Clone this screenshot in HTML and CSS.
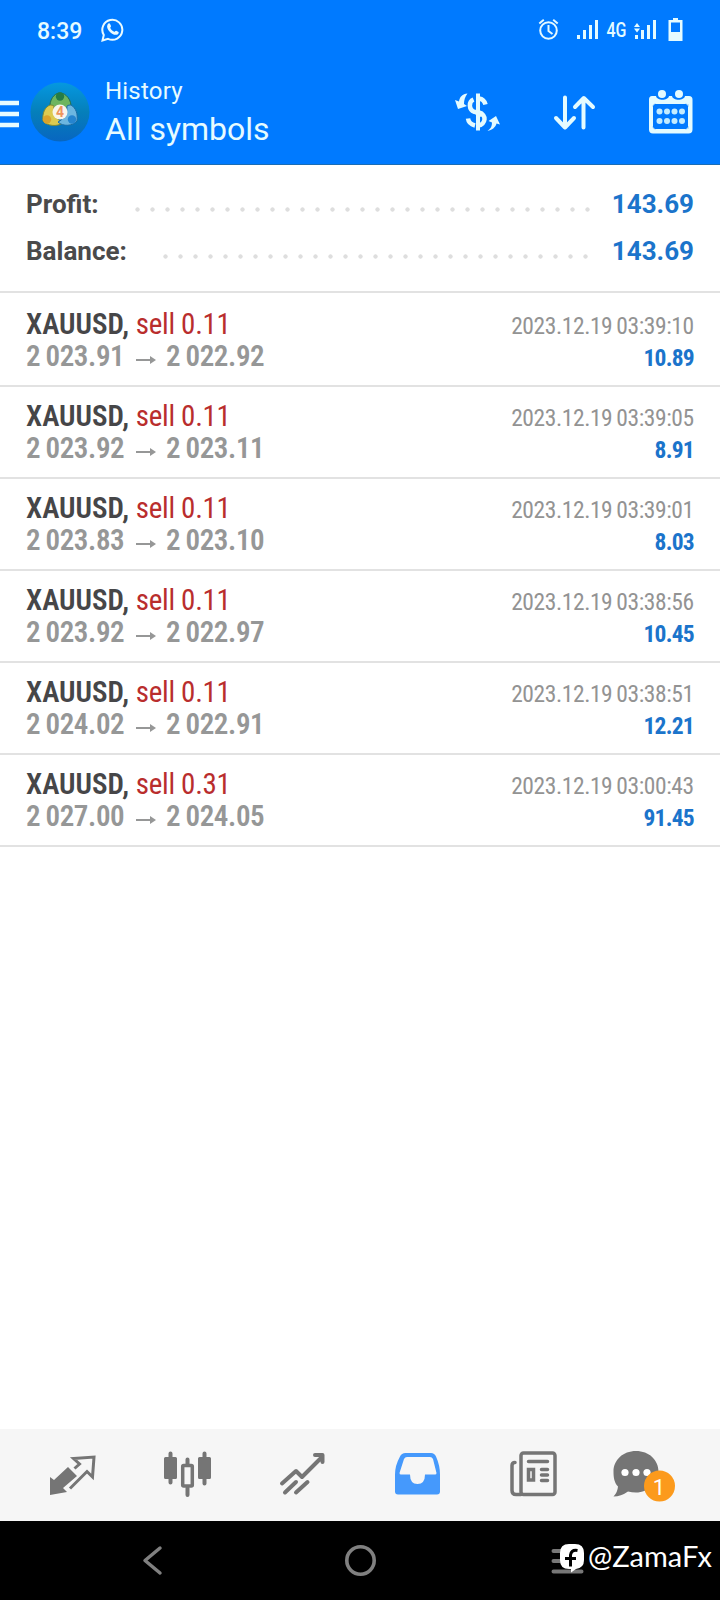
FILE: index.html
```html
<!DOCTYPE html>
<html lang="en">
<head>
<meta charset="utf-8">
<title>History</title>
<link rel="stylesheet" href="styles.css">
</head>
<body>
<div class="screen">
  <header class="top">
    <div class="status">
      <span class="clock">8:39</span>
      <svg class="whatsapp" width="24" height="26" viewBox="0 0 24 26"><path d="M1.500 23.500l1.300-5.500A10 10 0 1 1 7 21.800z" fill="none" stroke="#e9fbff" stroke-width="2"/><path d="M6.600 7.500c1-1.700 2.100-1.400 2.600-.3l.8 1.900c.2.700-.9 1.500-.7 2 .8 1.700 2.100 2.900 3.900 3.600.6.200 1.300-1.300 2-1l2 1c1 .6.500 2-.6 2.700-2.300 1.300-5.700-.3-7.900-2.700-2.200-2.300-3.400-5-2.100-7.200z" fill="#e9fbff"/></svg>
      <svg class="indicators" width="150" height="30" viewBox="535 15 150 30">
        <g fill="none" stroke="#e4f9ff" stroke-width="2"><circle cx="548.500" cy="30.500" r="8.300"/><path d="M548.500 25v6l4 3M539.300 23.500l4.500-3.700M557.700 23.500l-4.500-3.700"/></g>
        <g fill="#e4fbff"><path d="M577 35h3v4h-3zM583 30h3v9h-3zM589 25h3v14h-3zM595 20h3v19h-3zM635 35h3v4h-3zM641 30h3v9h-3zM647 25h3v14h-3zM653 20h3v19h-3z"/><path d="M634 27l3-4 3 4zM634 28.500h6l-3 4z"/><path fill-rule="evenodd" d="M673 18h5v2h4.500v21h-14V20h4.500zM671 22.500v9.500h9v-9.500z"/></g>
        <text class="net" x="606.500" y="36.500" textLength="20" lengthAdjust="spacingAndGlyphs">4G</text>
      </svg>
    </div>
    <div class="bar">
      <svg class="menu" width="20" height="30" viewBox="0 0 20 30"><path d="M0 4h19M0 15h19M0 26h19" stroke="#e6fbff" stroke-width="4.500"/></svg>
      <svg class="logo" width="60" height="60" viewBox="0 0 60 60">
        <defs>
          <linearGradient id="sea" x1="0" y1="0" x2="0" y2="1"><stop offset="0" stop-color="#0598e0"/><stop offset=".5" stop-color="#057fba"/><stop offset="1" stop-color="#0866c0"/></linearGradient>
        </defs>
        <circle cx="30" cy="30" r="29.500" fill="url(#sea)"/>
        <path d="M20 27c-1-9 4-16 10-16s12 7 11 16c-2 2-5 3-7 3h-8c-3 0-5-1-6-3z" fill="#6db55f" stroke="#286f48"/>
        <path d="M20 23c-5 2-8 8-7 16 4 5 14 6 20 2-7-4-10-9-9-17-1-1-3-1-4-1z" fill="#dccb50" stroke="#7b8a35"/>
        <path d="M41 23c5 3 7 9 6 16-4 5-14 6-19 1 6-3 9-8 9-16 1-1 3-1 4-1z" fill="#6cb6e0" stroke="#1b6ba4"/>
        <circle cx="30" cy="14.500" r="4.200" fill="#257c45"/><circle cx="17" cy="37.500" r="4.200" fill="#d9a32c"/><circle cx="42" cy="37.500" r="4.200" fill="#2584cf"/>
        <circle cx="30" cy="30" r="7.500" fill="#f8f5ec"/>
        <text class="four" x="30" y="35" text-anchor="middle">4</text>
      </svg>
      <div class="titles"><div class="kicker">History</div><div class="title">All symbols</div></div>
      <svg class="actions" width="245" height="50" viewBox="450 87 245 50">
        <g fill="none" stroke="#e4fbff">
          <path d="M478 93.500v37" stroke-width="4"/>
          <path d="M473.500 99.500c-5 2-5 10 1 12.500M479 98.500c3.500.5 5.500 2 6.500 6M479 112.500c8 2 7 12-1 13M468 118.500c.5 4 3 6 7 7M474 111.500l8 3.500" stroke-width="4.500"/>
        </g>
        <path d="M467.500 93.500c-5 .500-8 3.500-8.500 8l-4-1.500 3 9 9-3-3-2c0-4 1-7 3.500-10.500zM487.500 131c3.500-2.500 4.500-5 4.500-8.500l-3.500-1.500 7.500-5 4 8.500-3.500-1c-1 4-4.500 6.500-9 7.500z" fill="#e4fbff"/>
        <g fill="none" stroke="#e4fbff" stroke-width="4" stroke-linecap="round" stroke-linejoin="round"><path d="M565 97.500v30M556 118l9 9.500 9-9.500M583.500 127.500v-29M575 107l8.800-9 9.200 9"/></g>
        <path fill-rule="evenodd" fill="#e4fbff" d="M652 96h4c1 5 12 5 13 0h3c1 5 12 5 13 0h4q3.500 0 3.500 3.500v30q0 4-4 4h-35.500q-4 0-4-4v-30q0-3.500 3-3.500zm1.500 8.500v24h35v-24z"/>
        <rect x="652.500" y="103.500" width="36" height="26" rx="3" fill="#007aff" stroke="#e4fbff" stroke-width="1"/>
        <circle cx="662" cy="94" r="4" fill="#e4fbff"/><circle cx="679" cy="94" r="4" fill="#e4fbff"/>
        <g fill="#c3ecff"><circle cx="659.500" cy="111.500" r="3"/><circle cx="667" cy="111.500" r="3"/><circle cx="674.500" cy="111.500" r="3"/><circle cx="682" cy="111.500" r="3"/><circle cx="659.500" cy="121" r="3"/><circle cx="667" cy="121" r="3"/><circle cx="674.500" cy="121" r="3"/><circle cx="682" cy="121" r="3"/></g>
      </svg>
    </div>
  </header>

  <main class="content">
    <section class="summary">
      <div class="sum-row"><span class="label">Profit:</span><span class="dots dots-profit"></span><span class="total">143.69</span></div>
      <div class="sum-row"><span class="label">Balance:</span><span class="dots dots-balance"></span><span class="total">143.69</span></div>
    </section>
    <section class="deals">
      <div class="deal first"><div class="line"><span class="sym"><b>XAUUSD,</b> <span class="side">sell 0.11</span></span><span class="date">2023.12.19 03:39:10</span></div><div class="line"><span class="price"><span class="from">2 023.91</span><svg class="arrow" width="20" height="10" viewBox="0 0 20 10"><path d="M0 5h17"/><path class="tip" d="M14 1l6 4-6 4z"/></svg>2 022.92</span><span class="gain">10.89</span></div></div>
      <div class="deal"><div class="line"><span class="sym"><b>XAUUSD,</b> <span class="side">sell 0.11</span></span><span class="date">2023.12.19 03:39:05</span></div><div class="line"><span class="price"><span class="from">2 023.92</span><svg class="arrow" width="20" height="10" viewBox="0 0 20 10"><path d="M0 5h17"/><path class="tip" d="M14 1l6 4-6 4z"/></svg>2 023.11</span><span class="gain">8.91</span></div></div>
      <div class="deal"><div class="line"><span class="sym"><b>XAUUSD,</b> <span class="side">sell 0.11</span></span><span class="date">2023.12.19 03:39:01</span></div><div class="line"><span class="price"><span class="from">2 023.83</span><svg class="arrow" width="20" height="10" viewBox="0 0 20 10"><path d="M0 5h17"/><path class="tip" d="M14 1l6 4-6 4z"/></svg>2 023.10</span><span class="gain">8.03</span></div></div>
      <div class="deal"><div class="line"><span class="sym"><b>XAUUSD,</b> <span class="side">sell 0.11</span></span><span class="date">2023.12.19 03:38:56</span></div><div class="line"><span class="price"><span class="from">2 023.92</span><svg class="arrow" width="20" height="10" viewBox="0 0 20 10"><path d="M0 5h17"/><path class="tip" d="M14 1l6 4-6 4z"/></svg>2 022.97</span><span class="gain">10.45</span></div></div>
      <div class="deal"><div class="line"><span class="sym"><b>XAUUSD,</b> <span class="side">sell 0.11</span></span><span class="date">2023.12.19 03:38:51</span></div><div class="line"><span class="price"><span class="from">2 024.02</span><svg class="arrow" width="20" height="10" viewBox="0 0 20 10"><path d="M0 5h17"/><path class="tip" d="M14 1l6 4-6 4z"/></svg>2 022.91</span><span class="gain">12.21</span></div></div>
      <div class="deal"><div class="line"><span class="sym"><b>XAUUSD,</b> <span class="side">sell 0.31</span></span><span class="date">2023.12.19 03:00:43</span></div><div class="line"><span class="price"><span class="from">2 027.00</span><svg class="arrow" width="20" height="10" viewBox="0 0 20 10"><path d="M0 5h17"/><path class="tip" d="M14 1l6 4-6 4z"/></svg>2 024.05</span><span class="gain">91.45</span></div></div>
    </section>
  </main>

  <nav class="tabs">
    <svg class="tab" viewBox="15 1429 115 92"><path d="M50 1477l4 3 14-13 9 9-14 12 4 4-17 3z" fill="#757575"/><path d="M74.500 1468.500l5-4.500-6-5.500 20.500-1.500-1.500 20-5.500-5.500-17 17" fill="none" stroke="#757575" stroke-width="3"/></svg>
    <svg class="tab" viewBox="130 1429 115 92"><g fill="none" stroke="#757575" stroke-width="4" stroke-linecap="round"><path d="M170.500 1453.500v29M204.500 1453.500v30M187.500 1459.500v5M187.500 1488v7"/></g><path fill="#757575" d="M165.500 1457h10q1.500 0 1.500 1.500v19q0 1.500-1.500 1.500h-10q-1.500 0-1.500-1.500v-19q0-1.500 1.500-1.500zM199.500 1457h10q1.500 0 1.500 1.500v19q0 1.500-1.500 1.500h-10q-1.500 0-1.500-1.500v-19q0-1.500 1.500-1.500z"/><rect x="182.700" y="1465.500" width="9.600" height="20.500" rx="1" fill="#f6f6f6" stroke="#757575" stroke-width="3.500"/></svg>
    <svg class="tab" viewBox="245 1429 115 92"><g fill="none" stroke="#757575" stroke-width="4" stroke-linecap="round" stroke-linejoin="round"><path d="M282 1483.500l14-12.500 6 6 20-20M315 1455h7.500v7M285 1492.500l11-10.500M296 1492.500l11.500-10.500"/></g></svg>
    <svg class="tab" viewBox="360 1429 115 92"><path fill="#4599fc" d="M405.500 1453h25.500q3.500 0 5 3.500 4 9 4 18v17q0 3-3 3h-39q-3 0-3-3v-17q0-9 5-18 1.500-3.500 5.500-3.500z"/><path fill="#f6f6f6" d="M407 1457h23q2 0 3 2l3.500 14q0 1.500-1.500 1.500h-10q0 9.500-7.500 9.500t-7.500-9.500h-9q-1.500 0-1.500-1.500l4.500-14q1-2 3-2z"/></svg>
    <svg class="tab" viewBox="475 1429 115 92"><g fill="none" stroke="#757575" stroke-width="3.500" stroke-linecap="round"><rect x="521" y="1453" width="34" height="41.500" rx="2.500"/><path d="M521 1494.500h-5q-4 0-4-4v-25q0-3 3-3M528.500 1461.500h19M541.500 1469.500h6M541.500 1475h6M541.500 1480.500h6"/><path d="M528.500 1469.500h5v10.500h-5z" stroke-linecap="butt"/></g></svg>
    <svg class="tab" viewBox="590 1429 115 92"><path fill="#757575" d="M636 1451c13 0 22.500 9 22.500 20.500s-10 21-22.500 21q-4 0-8-1-7 5-14.500 5 4-4 4.500-10c-4-4-4.500-10-4.500-15 0-11.500 9.500-20.500 22.500-20.500z"/><g fill="#fff"><circle cx="625" cy="1472.500" r="3.600"/><circle cx="636" cy="1472.500" r="3.600"/><circle cx="647" cy="1472.500" r="3.600"/></g><circle cx="659.500" cy="1486" r="15.500" fill="#fc9a1c"/><text class="badge" x="659" y="1494.500" text-anchor="middle">1</text></svg>
  </nav>

  <footer class="sysnav">
    <svg width="720" height="79" viewBox="0 1521 720 79">
      <path d="M160 1548l-15 12.500 15 12.500" fill="none" stroke="#808080" stroke-width="3.500" stroke-linecap="round" stroke-linejoin="round"/>
      <circle cx="360.500" cy="1560.500" r="13.700" fill="none" stroke="#808080" stroke-width="3.600"/>
      <path d="M553.500 1551h28M553.500 1561h28M553.500 1571.500h28" stroke="#777" stroke-width="4" stroke-linecap="round"/>
      <path fill="#fff" d="M569 1544h6q9 0 9 9v7q0 8-8 9l-5 3.500v-3.500h-2q-9 0-9-9v-7q0-9 9-9z"/>
      <path d="M577.500 1550.500q-6-1-7 4.500v11.500M565 1558.500h11" fill="none" stroke="#000" stroke-width="3"/>
      <text class="handle" x="588" y="1566.500" textLength="124" lengthAdjust="spacingAndGlyphs">@ZamaFx</text>
    </svg>
  </footer>
</div>
</body>
</html>
```
FILE: styles.css
```css
* { box-sizing: border-box; }
body { margin: 0; background: #fff; font-family: Roboto, "Liberation Sans", sans-serif; }
svg { display: block; flex: none; }
.screen { width: 720px; height: 1600px; display: flex; flex-direction: column; overflow: hidden; }
.top { height: 165px; flex: none; background: #007aff; border-bottom: 1px solid #1b6db5; color: #e6fbff; }
.status { height: 60px; display: flex; align-items: center; padding: 0 35px 0 37px; }
.clock { font-size: 23px; font-weight: 500; line-height: 60px; padding-top: 3px; width: 64px; }
.indicators { margin-left: auto; }
.net { font-family: Roboto, sans-serif; font-size: 20px; font-weight: 500; fill: #e4fbff; }
.bar { height: 104px; display: flex; align-items: center; padding-right: 25px; }
.menu { margin-top: 4px; }
.logo { margin: 0 0 0 10px; }
.four { font: bold 14px Roboto, sans-serif; fill: #ee955c; }
.titles { margin-left: 15px; white-space: nowrap; }
.kicker { font-size: 24px; line-height: 35px; letter-spacing: .2px; }
.title { font-size: 32px; line-height: 41px; }
.actions { margin-left: auto; }
.content { flex: 1; }
.summary { height: 128px; padding: 15px 26px 0 26px; border-bottom: 2px solid #e2e2e2; }
.sum-row { height: 47px; display: flex; align-items: center; font-size: 26px; }
.label { color: #4a4a4b; font-weight: 700; }
.total { color: #1b74cb; font-weight: 700; }
.dots { height: 5px; margin-left: auto; margin-top: 11px; background: radial-gradient(circle at 2.500px 2.500px, #dedede 1.800px, transparent 2.500px) 0 0 / 15px 5px repeat-x; }
.dots-profit { width: 456px; margin-right: 21px; }
.dots-balance { width: 426px; margin-right: 23px; }
.deal { height: 92px; padding: 13px 26px 0 26px; border-bottom: 2px solid #e2e2e2; font-family: "Roboto Condensed", Roboto, sans-serif; font-stretch: 75%; }
.deal.first { height: 94px; padding-top: 15px; }
.line { height: 32px; line-height: 32px; display: flex; justify-content: space-between; white-space: nowrap; }
.sym { font-size: 29px; color: #b92d2d; }
.side { letter-spacing: -.3px; }
.sym b { color: #464648; font-weight: 600; }
.price { font-size: 29px; font-weight: 600; color: #969797; display: flex; align-items: center; letter-spacing: -.4px; word-spacing: -1px; }
.from { width: 98px; }
.arrow { margin: 7px 10px 0 12px; fill: none; stroke: #969797; stroke-width: 2; }
.tip { fill: #969797; stroke: none; }
.date { font-size: 23.500px; color: #939393; padding-top: 2px; letter-spacing: -.4px; word-spacing: -1px; margin-right: .3px; }
.gain { font-size: 23.500px; font-weight: 700; color: #1b74cb; padding-top: 2px; letter-spacing: -.75px; }
.tabs { height: 92px; flex: none; background: #f6f6f6; display: flex; padding-left: 15px; }
.tab { width: 115px; height: 92px; }
.badge { font: 22px Roboto, sans-serif; fill: #fff; }
.sysnav { height: 79px; flex: none; background: #000; }
.handle { font: 28px Lato, sans-serif; fill: #fff; }
```
